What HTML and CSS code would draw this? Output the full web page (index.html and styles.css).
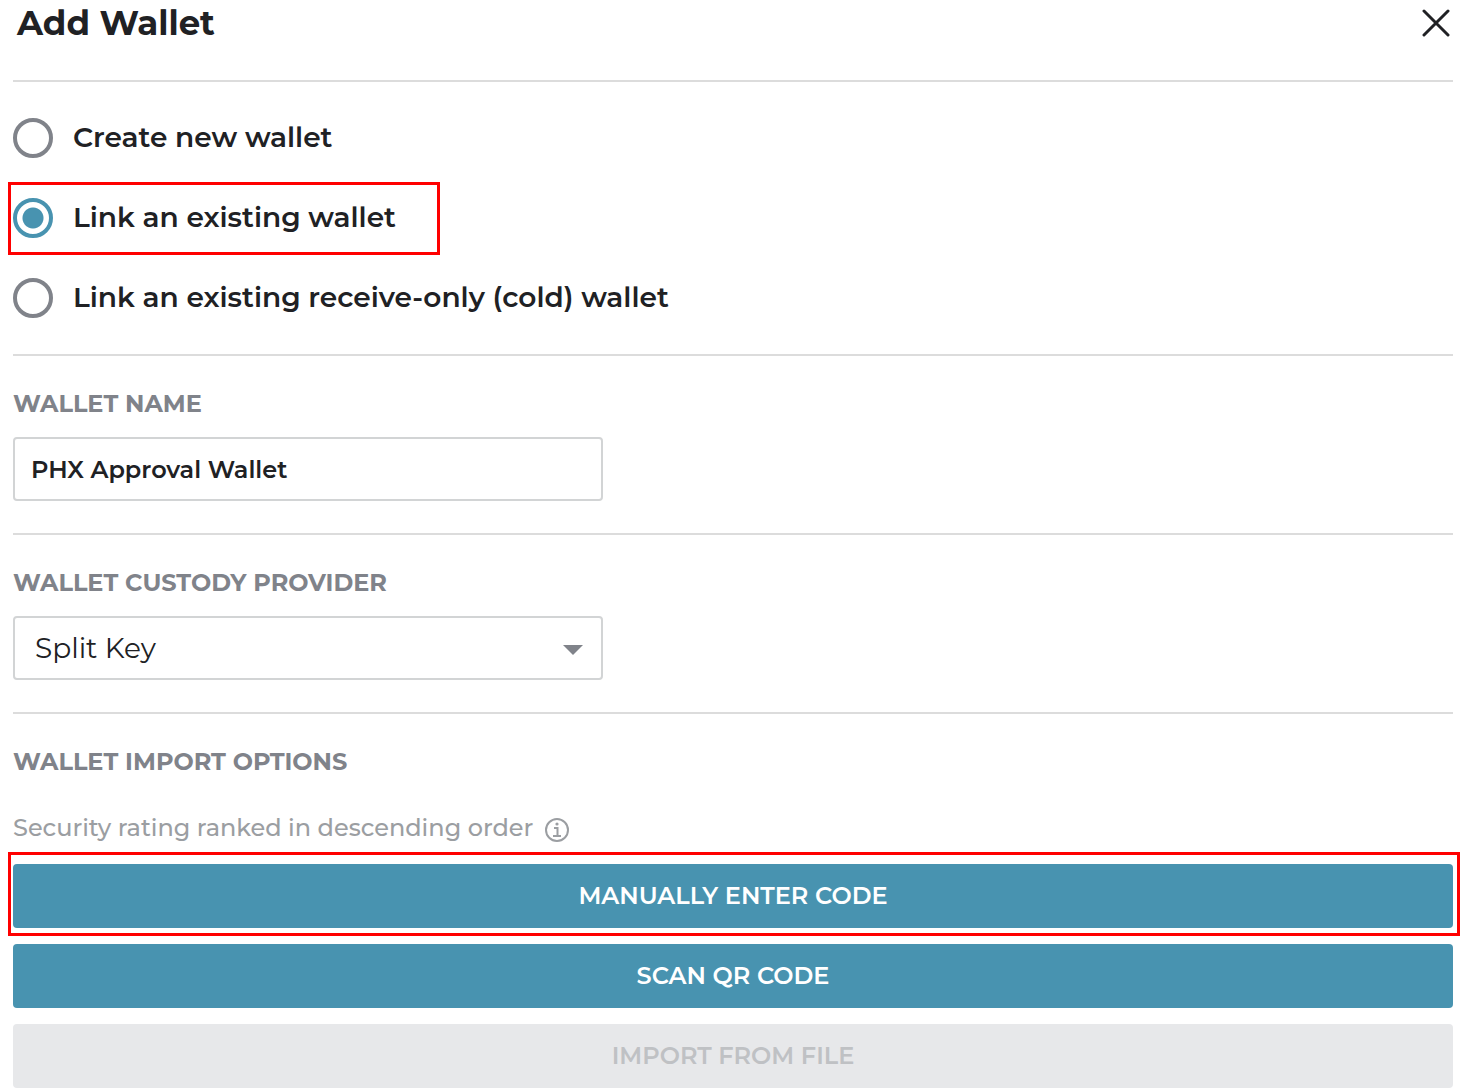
FILE: index.html
```html
<!DOCTYPE html>
<html lang="en">
<head>
<meta charset="utf-8">
<title>Add Wallet</title>
<link rel="stylesheet" href="styles.css">
</head>
<body>
<main class="dialog">
  <header class="header">
    <h1 class="title">Add Wallet</h1>
    <button class="close" type="button" aria-label="Close">
      <svg width="28" height="28" viewBox="0 0 28 28" aria-hidden="true"><path d="M2 2 26 26M26 2 2 26" fill="none" stroke="currentColor" stroke-width="3" stroke-linecap="round"/></svg>
    </button>
  </header>
  <form>
    <div class="options" role="radiogroup" aria-label="Wallet type">
      <label class="option"><input class="radio" type="radio" name="type"><span>Create new wallet</span></label>
      <label class="option option-marked"><input class="radio" type="radio" name="type" checked><span>Link an existing wallet</span></label>
      <label class="option"><input class="radio" type="radio" name="type"><span>Link an existing receive-only (cold) wallet</span></label>
    </div>
    <div class="section">
      <label class="label" for="wallet-name">WALLET NAME</label>
      <input class="field" id="wallet-name" type="text" value="PHX Approval Wallet">
    </div>
    <div class="section">
      <label class="label" for="provider">WALLET CUSTODY PROVIDER</label>
      <div class="select-wrap">
        <select class="field select" id="provider"><option>Split Key</option></select>
        <svg class="arrow" width="20" height="10" viewBox="0 0 20 10" aria-hidden="true"><path d="M0 0H20L10 10Z" fill="currentColor"/></svg>
      </div>
    </div>
    <div class="section">
      <h2 class="label">WALLET IMPORT OPTIONS</h2>
      <p class="hint">Security rating ranked in descending order
        <svg class="info" width="24" height="24" viewBox="0 0 24 24" aria-hidden="true"><circle cx="12" cy="12" r="11" fill="none" stroke="currentColor" stroke-width="2"/><path d="M9 10H12.5V18M8 18H16" fill="none" stroke="currentColor" stroke-width="2"/><circle cx="12" cy="6" r="1.6" fill="currentColor"/></svg>
      </p>
      <div class="actions">
        <div class="marked"><button class="button" type="button">MANUALLY ENTER CODE</button></div>
        <button class="button" type="button">SCAN QR CODE</button>
        <button class="button" type="button" disabled>IMPORT FROM FILE</button>
      </div>
    </div>
  </form>
</main>
</body>
</html>
```
FILE: styles.css
```css
*, *::before, *::after { box-sizing: border-box; }
body {
  margin: 0;
  background: #fff;
  color: #202124;
  font-family: Montserrat, Inter, sans-serif;
}
.dialog { padding: 0 16px 4px 13px; }
.header {
  display: flex;
  justify-content: space-between;
  align-items: center;
  padding: 0 3px 34px 4px;
}
.title { margin: 0; font-size: 34px; line-height: 46px; font-weight: 700; }
.close { display: flex; padding: 0; border: 0; background: none; color: #202124; }
.options {
  display: flex;
  flex-direction: column;
  align-items: flex-start;
  gap: 40px;
  padding: 36px 0;
  border-top: 2px solid #dcdcdc;
}
.option {
  position: relative;
  display: flex;
  align-items: flex-start;
  gap: 20px;
  font-size: 28px;
  line-height: 38px;
  font-weight: 600;
}
.radio {
  appearance: none;
  width: 40px;
  height: 40px;
  margin: 0;
  border: 4px solid #80838a;
  border-radius: 50%;
}
.radio:checked {
  border-color: #4893b0;
  background: radial-gradient(circle, #4893b0 10px, #fff 11px);
}
.option-marked::after {
  content: "";
  position: absolute;
  top: -16px;
  left: -5px;
  width: 432px;
  height: 73px;
  border: 3px solid #f00;
}
.section { padding: 32px 0; border-top: 2px solid #dcdcdc; }
.section:last-child { padding-bottom: 0; }
.label {
  display: block;
  margin: 0 0 17px;
  color: #80838a;
  font-size: 24px;
  line-height: 32px;
  font-weight: 700;
}
.field {
  display: block;
  width: 100%;
  max-width: 590px;
  height: 64px;
  padding: 0 16px;
  border: 2px solid #d2d4d5;
  border-radius: 4px;
  background: #fff;
  color: #202124;
  font: 600 24px Montserrat, Inter, sans-serif;
}
.select-wrap { position: relative; max-width: 590px; }
.select { appearance: none; padding: 0 20px; font-size: 28px; font-weight: 400; }
.arrow { position: absolute; top: 29px; right: 20px; color: #80838a; pointer-events: none; }
.hint {
  display: flex;
  align-items: center;
  gap: 12px;
  margin: 35px 0 21px;
  color: #9b9ea2;
  font-size: 24px;
  line-height: 30px;
  font-weight: 500;
}
.info { margin-top: 4px; }
.actions { display: flex; flex-direction: column; gap: 16px; }
.marked { position: relative; }
.marked::after {
  content: "";
  position: absolute;
  inset: -12px -7px -8px -5px;
  border: 3px solid #f00;
  pointer-events: none;
}
.button {
  display: block;
  width: 100%;
  height: 64px;
  padding: 0 0 2px;
  border: 0;
  border-radius: 4px;
  background: #4893b0;
  color: #fff;
  font: 600 24px Montserrat, Inter, sans-serif;
}
.button:disabled { background: #e7e8ea; color: #bfc1c4; }
```
